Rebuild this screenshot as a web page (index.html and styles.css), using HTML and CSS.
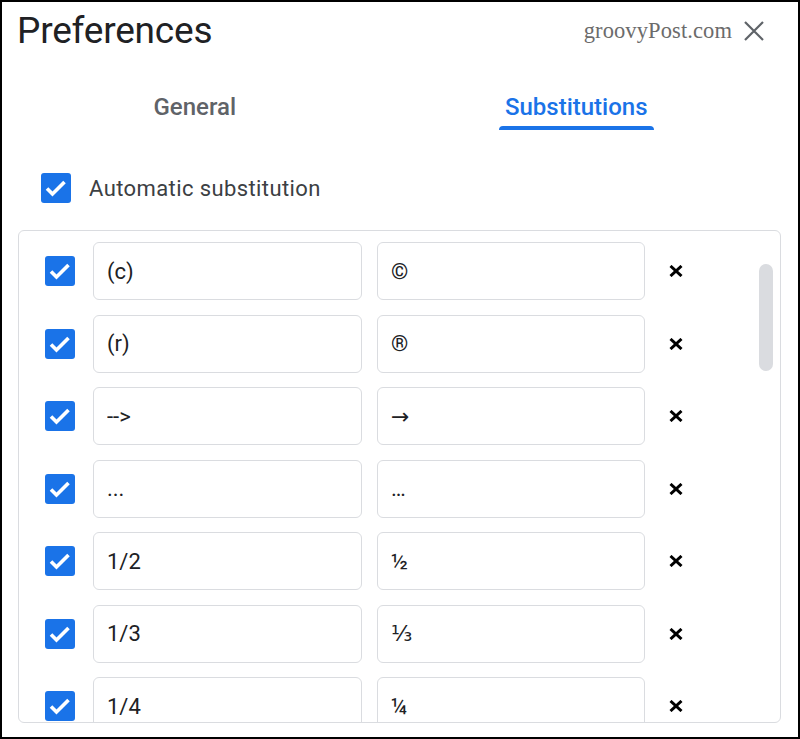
FILE: index.html
```html
<!DOCTYPE html>
<html>
<head>
<meta charset="utf-8">
<link rel="stylesheet" href="styles.css">
</head>
<body>
<div class="frame">
  <div class="header">
    <h1 class="title">Preferences</h1>
    <div class="header-right">
      <span class="brand">groovyPost.com</span>
      <svg class="close" width="22" height="22" viewBox="0 0 22 22"><path d="M2 2 L20 20 M20 2 L2 20" stroke="#5f6368" stroke-width="2.2" fill="none"/></svg>
    </div>
  </div>
  <div class="tabs">
    <div class="tab"><span class="tab-label">General</span></div>
    <div class="tab active"><span class="tab-label">Substitutions</span><span class="tab-indicator"></span></div>
  </div>
  <div class="auto-row">
    <span class="cb"><svg width="30" height="30" viewBox="0 0 30 30"><path d="M6 15.5 L11.5 21 L23.5 9" stroke="#fff" stroke-width="3.6" fill="none"/></svg></span>
    <span class="auto-label">Automatic substitution</span>
  </div>
  <div class="list">
    <div class="rows">
      <div class="row">
        <span class="cb"><svg width="30" height="30" viewBox="0 0 30 30"><path d="M6 15.5 L11.5 21 L23.5 9" stroke="#fff" stroke-width="3.6" fill="none"/></svg></span>
        <input class="field" type="text" value="(c)">
        <input class="field" type="text" value="©">
        <svg class="del" width="14" height="12" viewBox="0 0 14 12"><path d="M1.5 1 L12.5 11 M12.5 1 L1.5 11" stroke="#000" stroke-width="3" fill="none"/></svg>
      </div>
      <div class="row">
        <span class="cb"><svg width="30" height="30" viewBox="0 0 30 30"><path d="M6 15.5 L11.5 21 L23.5 9" stroke="#fff" stroke-width="3.6" fill="none"/></svg></span>
        <input class="field" type="text" value="(r)">
        <input class="field" type="text" value="®">
        <svg class="del" width="14" height="12" viewBox="0 0 14 12"><path d="M1.5 1 L12.5 11 M12.5 1 L1.5 11" stroke="#000" stroke-width="3" fill="none"/></svg>
      </div>
      <div class="row">
        <span class="cb"><svg width="30" height="30" viewBox="0 0 30 30"><path d="M6 15.5 L11.5 21 L23.5 9" stroke="#fff" stroke-width="3.6" fill="none"/></svg></span>
        <input class="field" type="text" value="-->">
        <input class="field" type="text" value="→">
        <svg class="del" width="14" height="12" viewBox="0 0 14 12"><path d="M1.5 1 L12.5 11 M12.5 1 L1.5 11" stroke="#000" stroke-width="3" fill="none"/></svg>
      </div>
      <div class="row">
        <span class="cb"><svg width="30" height="30" viewBox="0 0 30 30"><path d="M6 15.5 L11.5 21 L23.5 9" stroke="#fff" stroke-width="3.6" fill="none"/></svg></span>
        <input class="field" type="text" value="...">
        <input class="field" type="text" value="…">
        <svg class="del" width="14" height="12" viewBox="0 0 14 12"><path d="M1.5 1 L12.5 11 M12.5 1 L1.5 11" stroke="#000" stroke-width="3" fill="none"/></svg>
      </div>
      <div class="row">
        <span class="cb"><svg width="30" height="30" viewBox="0 0 30 30"><path d="M6 15.5 L11.5 21 L23.5 9" stroke="#fff" stroke-width="3.6" fill="none"/></svg></span>
        <input class="field" type="text" value="1/2">
        <input class="field" type="text" value="½">
        <svg class="del" width="14" height="12" viewBox="0 0 14 12"><path d="M1.5 1 L12.5 11 M12.5 1 L1.5 11" stroke="#000" stroke-width="3" fill="none"/></svg>
      </div>
      <div class="row">
        <span class="cb"><svg width="30" height="30" viewBox="0 0 30 30"><path d="M6 15.5 L11.5 21 L23.5 9" stroke="#fff" stroke-width="3.6" fill="none"/></svg></span>
        <input class="field" type="text" value="1/3">
        <input class="field" type="text" value="⅓">
        <svg class="del" width="14" height="12" viewBox="0 0 14 12"><path d="M1.5 1 L12.5 11 M12.5 1 L1.5 11" stroke="#000" stroke-width="3" fill="none"/></svg>
      </div>
      <div class="row">
        <span class="cb"><svg width="30" height="30" viewBox="0 0 30 30"><path d="M6 15.5 L11.5 21 L23.5 9" stroke="#fff" stroke-width="3.6" fill="none"/></svg></span>
        <input class="field" type="text" value="1/4">
        <input class="field" type="text" value="¼">
        <svg class="del" width="14" height="12" viewBox="0 0 14 12"><path d="M1.5 1 L12.5 11 M12.5 1 L1.5 11" stroke="#000" stroke-width="3" fill="none"/></svg>
      </div>
    </div>
    <div class="thumb"></div>
  </div>
</div>
</body>
</html>
```

FILE: styles.css
```css
html, body {
  margin: 0;
  padding: 0;
  background: #fff;
}
.frame {
  width: 800px;
  height: 739px;
  box-sizing: border-box;
  border: 2px solid #000;
  overflow: hidden;
  background: #fff;
  font-family: Roboto, "Open Sans", sans-serif;
  color: #202124;
}
.header {
  display: flex;
  align-items: flex-start;
  padding: 7px 33px 0 15px;
  height: 53px;
}
.title {
  margin: 0;
  font-size: 37px;
  font-weight: 400;
  line-height: 44px;
  color: #202124;
  letter-spacing: -0.2px;
}
.header-right {
  margin-left: auto;
  margin-top: 9px;
  display: flex;
  align-items: center;
  gap: 11px;
}
.brand {
  font-family: "Liberation Serif", serif;
  font-size: 22.5px;
  letter-spacing: 0.1px;
  color: #6b6b6b;
}
.close {
  display: block;
}
.tabs {
  display: flex;
  padding-left: 2px;
  margin-top: 14px;
}
.tab {
  width: 381.5px;
  display: flex;
  flex-direction: column;
  align-items: center;
  height: 56px;
}
.tab-label {
  font-size: 24px;
  font-weight: 500;
  line-height: 38px;
  padding-top: 12px;
  color: #5f6368;
}
.tab.active .tab-label {
  color: #1a73e8;
}
.tab-indicator {
  display: block;
  width: 155px;
  height: 4px;
  background: #1a73e8;
  border-radius: 4px 4px 0 0;
}
.auto-row {
  display: flex;
  align-items: center;
  padding-left: 39px;
  margin-top: 40px;
  height: 32px;
}
.cb {
  width: 30px;
  height: 30px;
  border-radius: 3px;
  background: #1a73e8;
  flex: none;
  display: block;
}
.cb svg {
  display: block;
}
.auto-label {
  margin-left: 18px;
  font-size: 22px;
  letter-spacing: 0.4px;
  color: #3c4043;
}
.list {
  position: relative;
  margin: 26px 0 0 16px;
  width: 763px;
  height: 493px;
  box-sizing: border-box;
  border: 1px solid #dadce0;
  border-radius: 6px;
  overflow: hidden;
}
.rows {
  display: flex;
  flex-direction: column;
  gap: 14.5px;
  padding: 11px 0 0 26px;
}
.row {
  display: flex;
  align-items: center;
  height: 58px;
  flex: none;
}
.field {
  box-sizing: border-box;
  height: 58px;
  border: 1.5px solid #dadce0;
  border-radius: 6px;
  padding: 0 0 0 13px;
  font-family: Roboto, "DejaVu Sans", sans-serif;
  font-size: 22px;
  color: #202124;
  background: #fff;
  outline: none;
}
.field:first-of-type {
  width: 269px;
  margin-left: 18px;
}
.field + .field {
  width: 268px;
  margin-left: 15px;
}
.del {
  display: block;
  margin-left: 24px;
}
.thumb {
  position: absolute;
  left: 740px;
  top: 33px;
  width: 14px;
  height: 107px;
  border-radius: 7px;
  background: #dadce0;
}
```
